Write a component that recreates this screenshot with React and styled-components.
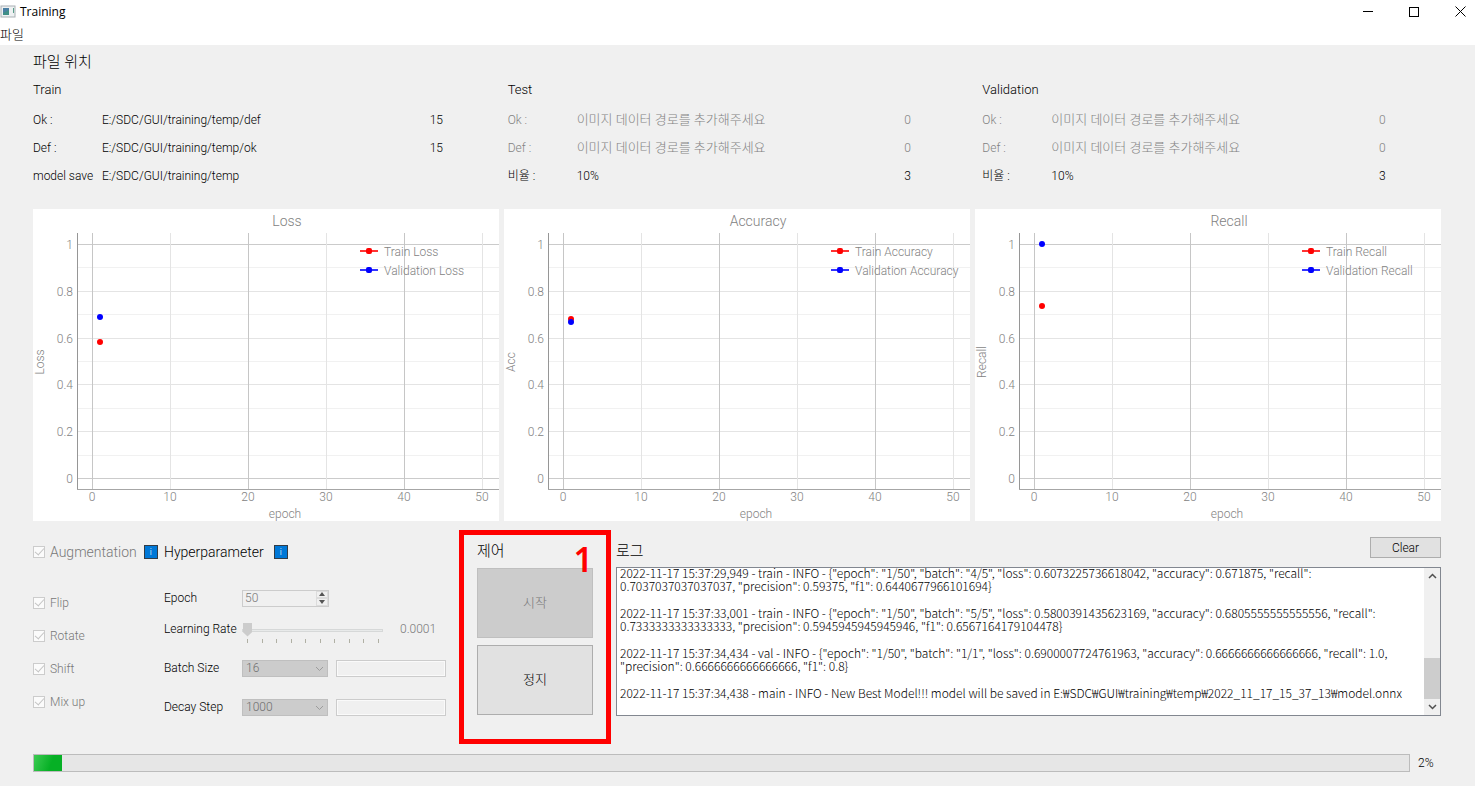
import React, { useLayoutEffect, useRef, useState } from "react";
import styled, { createGlobalStyle } from "styled-components";

const GlobalStyle = createGlobalStyle`
  * { box-sizing: border-box; }
  body {
    margin: 0;
    background: #f0f0f0;
    color: #000;
    font-family: Roboto, "Noto Sans CJK KR", sans-serif;
    font-size: 12px;
    font-weight: 300;
    line-height: 16px;
  }
  button, input, select { font: inherit; color: inherit; margin: 0; }
  h1, h2, h3 { margin: 0; font-weight: 300; }
`;

/* ---------- window frame ---------- */

const TitleBar = styled.header`
  display: flex;
  align-items: center;
  height: 23px;
  gap: 4px;
  background: #fff;
`;

const WindowTitle = styled.h1`
  flex: 1;
  font: 400 12px/16px "Open Sans", sans-serif;
`;

const WindowButtons = styled.div`
  display: flex;
`;

const WindowButton = styled.button`
  display: flex;
  align-items: center;
  justify-content: center;
  width: 46px;
  height: 23px;
  padding: 0;
  border: 0;
  background: none;
  &:last-child { width: 38px; padding-left: 8px; }
`;

const MenuBar = styled.nav`
  height: 22px;
  background: #fff;
`;

const MenuItem = styled.button`
  display: block;
  height: 22px;
  padding: 2px 0 0;
  border: 0;
  background: none;
  font-size: 13px;
  line-height: 20px;
`;

const Page = styled.main`
  padding: 7px 34px 12px 33px;
`;

/* ---------- data locations ---------- */

const SectionTitle = styled.h2`
  font-size: 15px;
  line-height: 20px;
`;

const DataSets = styled.section`
  display: grid;
  grid-template-columns: repeat(3, 1fr);
  margin: 10px -16px 0 0;
`;

const SetTitle = styled.h3`
  font-size: 13px;
  line-height: 16px;
`;

const SetTable = styled.table`
  width: 100%;
  margin-top: 8px;
  border-collapse: collapse;
  table-layout: fixed;
`;

const SetRow = styled.tr`
  height: 28px;
  color: ${(p) => (p.$muted ? "#828282" : "inherit")};
`;

const RowLabel = styled.th`
  width: 69px;
  padding: 0;
  text-align: left;
  font-weight: 300;
  white-space: nowrap;
`;

const RowValue = styled.td`
  padding: 0;
  font-size: ${(p) => (p.$hint ? "13px" : "12px")};
`;

const RowCount = styled.td`
  width: 78px;
  padding: 0;
`;

/* ---------- charts ---------- */

const Charts = styled.section`
  display: grid;
  grid-template-columns: repeat(3, 1fr);
  gap: 5px;
  margin-top: 19px;
`;

const ChartCard = styled.div`
  min-width: 0;
  height: 312px;
  background: #fff;
`;

const ChartSvg = styled.svg`
  display: block;
  width: 100%;
  height: 312px;
  fill: #828282;
  font-size: 12px;
`;

/* ---------- settings ---------- */

const Bottom = styled.section`
  display: flex;
  align-items: flex-start;
  margin-top: 9px;
`;

const Augmentation = styled.div`
  width: 131px;
  padding-top: 12px;
  color: #787878;
`;

const Hyper = styled.div`
  width: 295px;
  padding-top: 12px;
`;

const PanelHead = styled.div`
  display: flex;
  align-items: center;
  height: 20px;
  gap: ${(p) => p.$gap}px;
  font-size: 14px;
  line-height: 20px;
`;

const CheckLabel = styled.label`
  display: flex;
  align-items: center;
  gap: 5px;
`;

const CheckList = styled.div`
  display: grid;
  grid-auto-rows: 33px;
  align-items: center;
  margin-top: 24px;
`;

const CheckBox = styled.input`
  appearance: none;
  width: 12px;
  height: 12px;
  border: 1px solid #ccc;
  background: #fbfbfb;
  &:checked::after {
    content: "";
    display: block;
    width: 4px;
    height: 8px;
    margin: -1px auto 0;
    border: solid #c4c4c4;
    border-width: 0 1px 1px 0;
    transform: rotate(42deg);
  }
`;

const InfoButton = styled.button`
  display: flex;
  align-items: center;
  justify-content: center;
  width: 14px;
  height: 14px;
  padding: 0;
  border: 1px solid #333c46;
  background: #0078d7;
  color: #fff;
  font-size: 9px;
  line-height: 9px;
`;

const Fields = styled.div`
  display: grid;
  grid-template-columns: 78px 1fr;
  grid-template-rows: 18px 44px 34px 44px;
  align-items: center;
  margin-top: 27px;
`;

const FieldLabel = styled.label`
  white-space: nowrap;
`;

const FieldRow = styled.div`
  display: flex;
  align-items: center;
  gap: ${(p) => p.$gap || 8}px;
  color: #787878;
`;

const Spin = styled.div`
  display: flex;
  width: 87px;
  height: 17px;
  border: 1px solid #ccc;
  background: #f0f0f0;
`;

const SpinInput = styled.input`
  appearance: textfield;
  flex: 1;
  min-width: 0;
  padding: 0 2px;
  border: 0;
  background: none;
  &::-webkit-inner-spin-button { appearance: none; }
`;

const SpinArrows = styled.div`
  display: flex;
  flex-direction: column;
  width: 12px;
`;

const SpinArrow = styled.button`
  display: flex;
  flex: 1;
  align-items: center;
  justify-content: center;
  min-height: 0;
  padding: 0;
  border: 1px solid #dcdcdc;
  background: #f0f0f0;
`;

const SliderBox = styled.div`
  width: 141px;
  padding-top: 8px;
`;

const Range = styled.input`
  appearance: none;
  display: block;
  width: 100%;
  height: 14px;
  background: none;
  &::-webkit-slider-runnable-track {
    height: 3px;
    border: 1px solid #d6d8d8;
    background: #e8eaea;
  }
  &::-webkit-slider-thumb {
    appearance: none;
    width: 9px;
    height: 14px;
    margin-top: -7px;
    background: #ccc;
    clip-path: polygon(0 0, 100% 0, 100% 70%, 50% 100%, 0 70%);
  }
`;

const Ticks = styled.div`
  display: flex;
  justify-content: space-between;
  width: 132px;
  margin: 2px 0 0 5px;
`;

const Tick = styled.span`
  width: 1px;
  height: 4px;
  background: #b0b0a4;
`;

const SelectWrap = styled.div`
  position: relative;
  width: 86px;
  height: 17px;
`;

const Select = styled.select`
  appearance: none;
  display: block;
  width: 100%;
  height: 17px;
  padding: 0 3px;
  border: 1px solid #bfbfbf;
  border-radius: 0;
  background: #ccc;
  line-height: 15px;
  &:disabled { color: #6e6e6e; opacity: 1; }
`;

const SelectArrow = styled.svg`
  position: absolute;
  right: 4px;
  top: 6px;
  pointer-events: none;
`;

const TextField = styled.input`
  width: 110px;
  height: 17px;
  padding: 0 2px;
  border: 1px solid #ccc;
  background: #f0f0f0;
  box-shadow: inset 0 0 0 1px #fafafa;
`;

/* ---------- run control ---------- */

const Control = styled.div`
  position: relative;
  width: 152px;
  height: 214px;
  padding: 6px 13px;
  border: 5px solid #f00;
`;

const Marker = styled.span`
  position: absolute;
  top: 6px;
  right: 13px;
  color: #f00;
  font: 600 34px/36px "Noto Sans", sans-serif;
`;

const ControlButton = styled.button`
  display: block;
  width: 116px;
  height: 70px;
  margin-top: 7px;
  border: 1px solid ${(p) => (p.disabled ? "#bfbfbf" : "#adadad")};
  background: ${(p) => (p.disabled ? "#ccc" : "#e1e1e1")};
  color: ${(p) => (p.disabled ? "#787878" : "#000")};
  font-size: 13px;
`;

/* ---------- log ---------- */

const LogPanel = styled.div`
  flex: 1;
  min-width: 0;
  margin-left: 5px;
  padding-top: 7px;
`;

const LogHead = styled.div`
  display: flex;
  justify-content: space-between;
  height: 30px;
`;

const LogTitle = styled(SectionTitle)`
  padding-top: 4px;
`;

const ClearButton = styled.button`
  width: 71px;
  height: 21px;
  padding: 0;
  border: 1px solid #adadad;
  background: #e1e1e1;
`;

const LogBox = styled.div`
  display: flex;
  height: 149px;
  border: 1px solid #828790;
  background: #fff;
`;

const LogText = styled.div`
  display: flex;
  flex: 1;
  flex-direction: column;
  justify-content: flex-end;
  gap: 14px;
  min-width: 0;
  padding: 0 3px 16px;
  overflow: hidden;
  font-family: "Noto Sans CJK KR", sans-serif;
`;

const LogEntry = styled.p`
  margin: 0;
  line-height: 13px;
  white-space: pre-line;
`;

const ScrollBar = styled.div`
  display: flex;
  flex-direction: column;
  width: 16px;
  background: #f0f0f0;
`;

const ScrollButton = styled.button`
  display: flex;
  align-items: center;
  justify-content: center;
  height: 16px;
  padding: 0;
  border: 0;
  background: none;
`;

const ScrollTrack = styled.div`
  display: flex;
  flex: 1;
  align-items: flex-end;
`;

const ScrollThumb = styled.div`
  width: 100%;
  height: 36%;
  background: #cdcdcd;
`;

/* ---------- progress ---------- */

const ProgressRow = styled.div`
  display: flex;
  align-items: center;
  gap: 8px;
  margin: 10px -1px 0 0;
`;

const Progress = styled.progress`
  appearance: none;
  flex: 1;
  height: 18px;
  border: 1px solid #bcbcbc;
  background: #e6e6e6;
  &::-webkit-progress-bar { background: #e6e6e6; }
  &::-webkit-progress-value { background: linear-gradient(110deg, #3ccb52, #06b025 60%); }
`;

const ProgressText = styled.label`
  width: 24px;
`;

/* ---------- data ---------- */

const HINT = "이미지 데이터 경로를 추가해주세요";

const dataSets = [
  {
    title: "Train",
    rows: [
      { label: "Ok :", value: "E:/SDC/GUI/training/temp/def", count: 15 },
      { label: "Def :", value: "E:/SDC/GUI/training/temp/ok", count: 15 },
      { label: "model save", value: "E:/SDC/GUI/training/temp" },
    ],
  },
  ...["Test", "Validation"].map((title) => ({
    title,
    rows: [
      { label: "Ok :", value: HINT, count: 0, muted: true },
      { label: "Def :", value: HINT, count: 0, muted: true },
      { label: "비율 :", value: "10%", count: 3 },
    ],
  })),
];

const charts = [
  { name: "Loss", axis: "Loss", train: 0.58, val: 0.69 },
  { name: "Accuracy", axis: "Acc", train: 0.6806, val: 0.6667 },
  { name: "Recall", axis: "Recall", train: 0.7333, val: 1 },
];

const logEntries = [
  '2022-11-17 15:37:29,949 - train - INFO - {"epoch": "1/50", "batch": "4/5", "loss": 0.6073225736618042, "accuracy": 0.671875, "recall":\n0.7037037037037037, "precision": 0.59375, "f1": 0.6440677966101694}',
  '2022-11-17 15:37:33,001 - train - INFO - {"epoch": "1/50", "batch": "5/5", "loss": 0.5800391435623169, "accuracy": 0.6805555555555556, "recall":\n0.7333333333333333, "precision": 0.5945945945945946, "f1": 0.6567164179104478}',
  '2022-11-17 15:37:34,434 - val - INFO - {"epoch": "1/50", "batch": "1/1", "loss": 0.6900007724761963, "accuracy": 0.6666666666666666, "recall": 1.0,\n"precision": 0.6666666666666666, "f1": 0.8}',
  "2022-11-17 15:37:34,438 - main - INFO - New Best Model!!! model will be saved in E:₩SDC₩GUI₩training₩temp₩2022_11_17_15_37_13₩model.onnx",
];

/* ---------- parts ---------- */

const PLOT = { left: 44, top: 24, bottom: 281, zeroY: 269, oneY: 35 };

function Chart({ name, axis, train, val }) {
  const ref = useRef(null);
  const [width, setWidth] = useState(466);

  useLayoutEffect(() => {
    const observer = new ResizeObserver(([entry]) =>
      setWidth(Math.round(entry.contentRect.width))
    );
    observer.observe(ref.current);
    return () => observer.disconnect();
  }, []);

  const unit = (width - 76) / 50;
  const x = (v) => Math.round(59 + v * unit);
  const y = (v) => Math.round(PLOT.zeroY - v * (PLOT.zeroY - PLOT.oneY));
  const legendX = width - 139;

  return (
    <ChartCard ref={ref}>
      <ChartSvg role="img" aria-label={`${name} chart`}>
        <text x={width / 2 + 21} y="17" textAnchor="middle" fontSize="14">{name}</text>
        <g shapeRendering="crispEdges">
          {Array.from({ length: 11 }, (_, i) => (
            <rect key={i} x={PLOT.left} y={y(i / 10)} width={width - PLOT.left} height="1"
              fill={i % 10 === 0 ? "#cbcbcb" : i % 2 === 0 ? "#e4e4e4" : "#f1f1f1"} />
          ))}
          {[0, 10, 20, 30, 40, 50].map((v) => (
            <rect key={v} x={x(v)} y={PLOT.top} width="1" height={PLOT.bottom - PLOT.top}
              fill={v % 20 === 0 ? "#c6c6c6" : "#e4e4e4"} />
          ))}
          <rect x={PLOT.left} y={PLOT.top} width="1" height={PLOT.bottom - PLOT.top} fill="#969696" />
          <rect x={PLOT.left} y={PLOT.bottom - 1} width={width - PLOT.left} height="1" fill="#a6a6a6" />
        </g>
        {[0, 0.2, 0.4, 0.6, 0.8, 1].map((v) => (
          <text key={v} x="40" y={y(v) + 5} textAnchor="end">{v}</text>
        ))}
        {[0, 10, 20, 30, 40, 50].map((v) => (
          <text key={v} x={x(v)} y="292" textAnchor="middle">{v}</text>
        ))}
        <text x={width / 2 + 19} y="309" textAnchor="middle">epoch</text>
        <text transform="translate(11 153) rotate(-90)" textAnchor="middle">{axis}</text>
        {[["Train", "#f00", 42], ["Validation", "#00f", 61]].map(([label, color, ly]) => (
          <g key={label}>
            <rect x={legendX} y={ly - 1} width="18" height="2" fill={color} opacity=".8" />
            <rect x={legendX + 6} y={ly - 3} width="6" height="6" rx="2" fill={color} />
            <text x={legendX + 24} y={ly + 5}>{label} {name}</text>
          </g>
        ))}
        <circle cx={x(1)} cy={y(train)} r="3" fill="#f00" />
        <circle cx={x(1)} cy={y(val)} r="3" fill="#00f" />
      </ChartSvg>
    </ChartCard>
  );
}

function Check({ children }) {
  return (
    <CheckLabel>
      <CheckBox type="checkbox" defaultChecked disabled />
      {children}
    </CheckLabel>
  );
}

function DropDown({ id, value }) {
  return (
    <SelectWrap>
      <Select id={id} defaultValue={value} disabled>
        <option>{value}</option>
      </Select>
      <SelectArrow width="9" height="6" fill="none" stroke="#9c9c9c">
        <path d="M1 1l3.5 3.5L8 1" />
      </SelectArrow>
    </SelectWrap>
  );
}

function Triangle({ down }) {
  return (
    <svg width="6" height="4" fill="#555">
      <path d={down ? "M0 0h6L3 4z" : "M0 4h6L3 0z"} />
    </svg>
  );
}

function Chevron({ down }) {
  return (
    <svg width="9" height="6" fill="none" stroke="#505050" strokeWidth="1.5">
      <path d={down ? "M1 1l3.5 3.5L8 1" : "M1 5l3.5-3.5L8 5"} />
    </svg>
  );
}

function AppIcon() {
  return (
    <svg width="16" height="13" viewBox="0 0 16 13">
      <rect x="1" y="1" width="14" height="11" fill="#eef1f2" stroke="#a9b0b4" />
      <rect x="3" y="3" width="6" height="7" fill="#3f8f86" />
      <path d="M3 3h6v2L3 8z" fill="#4a7fa3" />
      <path d="M13 3h1v5h-1z" fill="#5aa08c" />
    </svg>
  );
}

export default function App() {
  return (
    <>
      <GlobalStyle />
      <TitleBar>
        <AppIcon />
        <WindowTitle>Training</WindowTitle>
        <WindowButtons>
          <WindowButton aria-label="Minimize">
            <svg width="10" height="11"><path d="M0 5.5h10" stroke="#000" /></svg>
          </WindowButton>
          <WindowButton aria-label="Maximize">
            <svg width="10" height="10" fill="none"><rect x=".5" y=".5" width="9" height="9" stroke="#000" /></svg>
          </WindowButton>
          <WindowButton aria-label="Close">
            <svg width="11" height="11"><path d="M.5.5l10 10M10.5.5l-10 10" stroke="#000" /></svg>
          </WindowButton>
        </WindowButtons>
      </TitleBar>
      <MenuBar>
        <MenuItem>파일</MenuItem>
      </MenuBar>

      <Page>
        <SectionTitle>파일 위치</SectionTitle>
        <DataSets>
          {dataSets.map((set) => (
            <div key={set.title}>
              <SetTitle>{set.title}</SetTitle>
              <SetTable>
                <tbody>
                  {set.rows.map((row) => (
                    <SetRow key={row.label} $muted={row.muted}>
                      <RowLabel scope="row">{row.label}</RowLabel>
                      <RowValue $hint={row.muted}>{row.value}</RowValue>
                      <RowCount>{row.count}</RowCount>
                    </SetRow>
                  ))}
                </tbody>
              </SetTable>
            </div>
          ))}
        </DataSets>

        <Charts>
          {charts.map((chart) => (
            <Chart key={chart.name} {...chart} />
          ))}
        </Charts>

        <Bottom>
          <Augmentation>
            <PanelHead $gap={7}>
              <Check>Augmentation</Check>
              <InfoButton aria-label="About augmentation">i</InfoButton>
            </PanelHead>
            <CheckList>
              <Check>Flip</Check>
              <Check>Rotate</Check>
              <Check>Shift</Check>
              <Check>Mix up</Check>
            </CheckList>
          </Augmentation>

          <Hyper>
            <PanelHead $gap={10}>
              Hyperparameter
              <InfoButton aria-label="About hyperparameters">i</InfoButton>
            </PanelHead>
            <Fields>
              <FieldLabel htmlFor="epoch">Epoch</FieldLabel>
              <FieldRow>
                <Spin>
                  <SpinInput id="epoch" type="number" defaultValue={50} disabled />
                  <SpinArrows>
                    <SpinArrow aria-label="Increase" disabled><Triangle /></SpinArrow>
                    <SpinArrow aria-label="Decrease" disabled><Triangle down /></SpinArrow>
                  </SpinArrows>
                </Spin>
              </FieldRow>
              <FieldLabel htmlFor="rate">Learning Rate</FieldLabel>
              <FieldRow $gap={17}>
                <SliderBox>
                  <Range id="rate" type="range" min="0" max="9" defaultValue="0" disabled />
                  <Ticks>
                    {Array.from({ length: 10 }, (_, i) => <Tick key={i} />)}
                  </Ticks>
                </SliderBox>
                <output htmlFor="rate">0.0001</output>
              </FieldRow>
              <FieldLabel htmlFor="batch">Batch Size</FieldLabel>
              <FieldRow>
                <DropDown id="batch" value="16" />
                <TextField aria-label="Custom batch size" disabled />
              </FieldRow>
              <FieldLabel htmlFor="decay">Decay Step</FieldLabel>
              <FieldRow>
                <DropDown id="decay" value="1000" />
                <TextField aria-label="Custom decay step" disabled />
              </FieldRow>
            </Fields>
          </Hyper>

          <Control>
            <SectionTitle>제어</SectionTitle>
            <ControlButton disabled>시작</ControlButton>
            <ControlButton>정지</ControlButton>
            <Marker>1</Marker>
          </Control>

          <LogPanel>
            <LogHead>
              <LogTitle>로그</LogTitle>
              <ClearButton>Clear</ClearButton>
            </LogHead>
            <LogBox>
              <LogText role="log" tabIndex={0}>
                {logEntries.map((entry) => (
                  <LogEntry key={entry}>{entry}</LogEntry>
                ))}
              </LogText>
              <ScrollBar>
                <ScrollButton aria-label="Scroll up"><Chevron /></ScrollButton>
                <ScrollTrack><ScrollThumb /></ScrollTrack>
                <ScrollButton aria-label="Scroll down"><Chevron down /></ScrollButton>
              </ScrollBar>
            </LogBox>
          </LogPanel>
        </Bottom>

        <ProgressRow>
          <Progress id="progress" value={2} max={100} />
          <ProgressText htmlFor="progress">2%</ProgressText>
        </ProgressRow>
      </Page>
    </>
  );
}
